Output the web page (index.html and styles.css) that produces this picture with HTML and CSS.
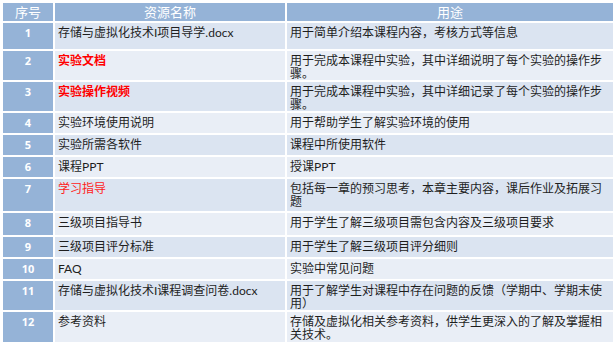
FILE: index.html
```html
<!DOCTYPE html>
<html lang="zh-CN">
<head>
    <meta charset="UTF-8">
    <title>课程资源列表</title>
    <link rel="stylesheet" href="styles.css">
</head>
<body>
    <table class="res-table">
        <colgroup>
            <col class="col-no">
            <col class="col-name">
            <col class="col-use">
        </colgroup>
        <thead>
            <tr>
                <th>序号</th>
                <th>资源名称</th>
                <th>用途</th>
            </tr>
        </thead>
        <tbody>
            <tr class="odd h26">
                <td class="no">1</td>
                <td>存储与虚拟化技术I项目导学.docx</td>
                <td>用于简单介绍本课程内容，考核方式等信息</td>
            </tr>
            <tr class="even">
                <td class="no">2</td>
                <td class="hot">实验文档</td>
                <td>用于完成本课程中实验，其中详细说明了每个实验的操作步骤。</td>
            </tr>
            <tr class="odd">
                <td class="no">3</td>
                <td class="hot">实验操作视频</td>
                <td>用于完成本课程中实验，其中详细记录了每个实验的操作步骤。</td>
            </tr>
            <tr class="even">
                <td class="no">4</td>
                <td>实验环境使用说明</td>
                <td>用于帮助学生了解实验环境的使用</td>
            </tr>
            <tr class="odd">
                <td class="no">5</td>
                <td>实验所需各软件</td>
                <td>课程中所使用软件</td>
            </tr>
            <tr class="even">
                <td class="no">6</td>
                <td>课程PPT</td>
                <td>授课PPT</td>
            </tr>
            <tr class="odd h32">
                <td class="no">7</td>
                <td class="warn">学习指导</td>
                <td>包括每一章的预习思考，本章主要内容，课后作业及拓展习题</td>
            </tr>
            <tr class="even h22">
                <td class="no">8</td>
                <td>三级项目指导书</td>
                <td>用于学生了解三级项目需包含内容及三级项目要求</td>
            </tr>
            <tr class="odd">
                <td class="no">9</td>
                <td>三级项目评分标准</td>
                <td>用于学生了解三级项目评分细则</td>
            </tr>
            <tr class="even">
                <td class="no">10</td>
                <td>FAQ</td>
                <td>实验中常见问题</td>
            </tr>
            <tr class="odd">
                <td class="no">11</td>
                <td>存储与虚拟化技术I课程调查问卷.docx</td>
                <td>用于了解学生对课程中存在问题的反馈（学期中、学期末使用）</td>
            </tr>
            <tr class="even h30">
                <td class="no">12</td>
                <td>参考资料</td>
                <td>存储及虚拟化相关参考资料，供学生更深入的了解及掌握相关技术。</td>
            </tr>
        </tbody>
    </table>
</body>
</html>
```

FILE: styles.css
```css
body {
    margin: 0;
    background: #fff;
    font-family: Lato, "Noto Sans CJK SC", sans-serif;
    color: #1e1e1e;
}

.res-table {
    margin: 1px;
    border-collapse: separate;
    border-spacing: 2px;
    table-layout: fixed;
    width: 614px;
}

.col-no {
    width: 50px;
}

.col-name {
    width: 230px;
}

.col-use {
    width: 326px;
}

th {
    height: 18px;
    padding: 0;
    background-color: #95b3d7;
    color: #fff;
    font-weight: normal;
    font-size: 13px;
    line-height: 18px;
    text-align: center;
}

td {
    height: 20px;
    padding: 3px 3px 0;
    font-size: 12px;
    line-height: 13px;
    vertical-align: top;
    box-sizing: border-box;
}

tr.odd td {
    background-color: #dbe4f1;
}

tr.even td {
    background-color: #e9eef6;
}

tr td.no {
    background-color: #95b3d7;
    color: #fff;
    font-family: "Open Sans", sans-serif;
    font-weight: bold;
    font-size: 11px;
    text-align: center;
}

.h22 td { height: 22px; }
.h26 td { height: 26px; }
.h30 td { height: 30px; }
.h32 td { height: 32px; }

.hot {
    color: #ff0000;
    font-weight: bold;
}

.warn {
    color: #ff1a1a;
}
```
